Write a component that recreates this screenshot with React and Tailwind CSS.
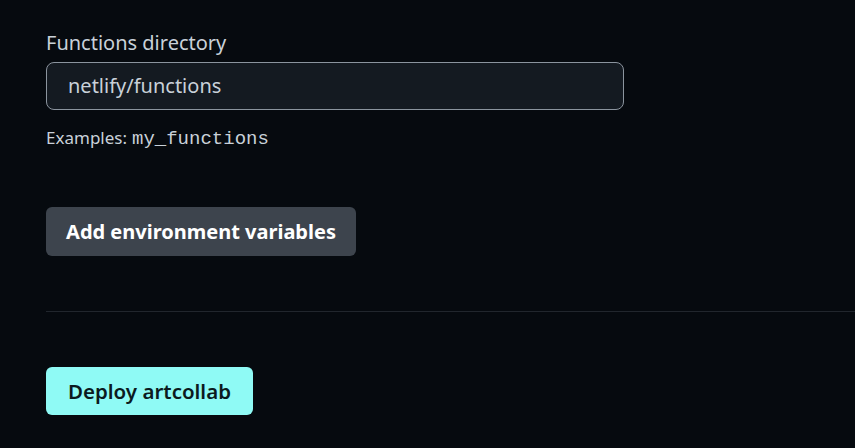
export default function App() {
  return (
    <div className="min-h-[448px] w-[855px] overflow-hidden bg-[#060a0f] font-['Noto_Sans',sans-serif] text-[#c9d1d9]">
      <div className="pl-[46px] pt-[28px]">
        <label className="block text-[20px] leading-[29px] text-[#c9d1d9]">Functions directory</label>
        <div className="mt-[5px] flex h-[48px] w-[578px] items-center rounded-[8px] border border-[#8b949e] bg-[#141a21] px-[21px] text-[20px] text-[#c9d1d9]">
          netlify/functions
        </div>
        <p className="mt-[16px] flex items-baseline text-[17px] leading-[24px] text-[#c9d1d9]">
          Examples:<code className="ml-[5px] font-['Liberation_Mono',monospace] text-[19px]">my_functions</code>
        </p>
        <button className="mt-[56px] flex h-[49px] w-[310px] items-center justify-center rounded-[6px] bg-[#3d444d] text-[20px] font-bold text-white">
          Add environment variables
        </button>
      </div>
      <div className="ml-[46px] mt-[55px] h-px bg-[#21262d]" />
      <div className="pl-[46px] pt-[55px]">
        <button className="flex h-[48px] w-[207px] items-center justify-center rounded-[6px] bg-[#8ffaf5] text-[20.5px] font-semibold text-[#0b1a20]">
          Deploy artcollab
        </button>
      </div>
    </div>
  );
}
